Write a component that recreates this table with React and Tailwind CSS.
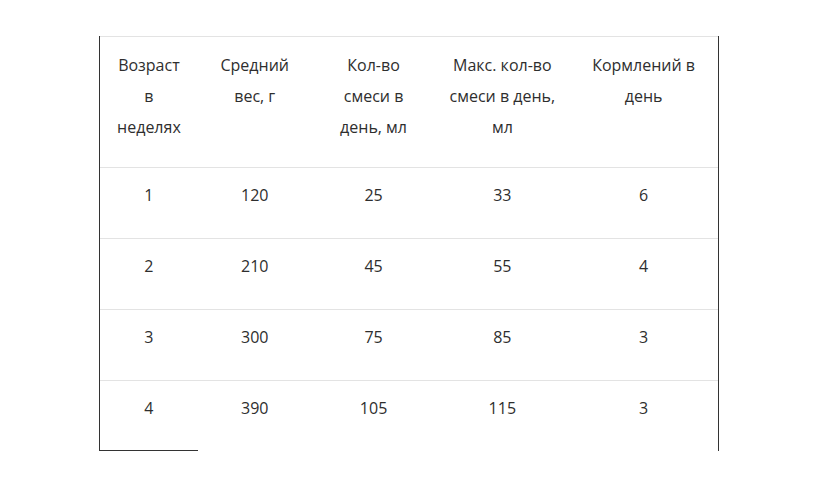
import React from "react";

const cols = ["w-[98px]", "w-[114px]", "w-[124px]", "w-[134px]", "w-[149px]"];

const header = [
  ["Возраст", "в", "неделях"],
  ["Средний", "вес, г"],
  ["Кол-во", "смеси в", "день, мл"],
  ["Макс. кол-во", "смеси в день,", "мл"],
  ["Кормлений в", "день"],
];

const rows = [
  ["1", "120", "25", "33", "6"],
  ["2", "210", "45", "55", "4"],
  ["3", "300", "75", "85", "3"],
  ["4", "390", "105", "115", "3"],
];

export default function App() {
  return (
    <div
      className="w-[816px] h-[482px] bg-white text-[#2e2e2e] overflow-hidden"
      style={{ fontFamily: '"Open Sans", "Noto Sans", sans-serif' }}
    >
      <div className="ml-[99px] mt-[36px] w-[620px] border-l border-r border-[#333] text-[16px] leading-[31px]">
        <div className="flex h-[131px] border-t border-[#e3e3e3]">
          {header.map((lines, i) => (
            <div key={i} className={`${cols[i]} text-center pt-[13px]`}>
              {lines.map((l, j) => (
                <div key={j} className="whitespace-nowrap">{l}</div>
              ))}
            </div>
          ))}
        </div>
        {rows.map((r, ri) => (
          <div key={ri} className="flex h-[71px] border-t border-[#e3e3e3]">
            {r.map((c, i) => (
              <div
                key={i}
                className={`${cols[i]} text-center pt-[12px] ${
                  ri === rows.length - 1 && i === 0 ? "border-b border-[#333]" : ""
                }`}
              >
                {c}
              </div>
            ))}
          </div>
        ))}
      </div>
    </div>
  );
}
